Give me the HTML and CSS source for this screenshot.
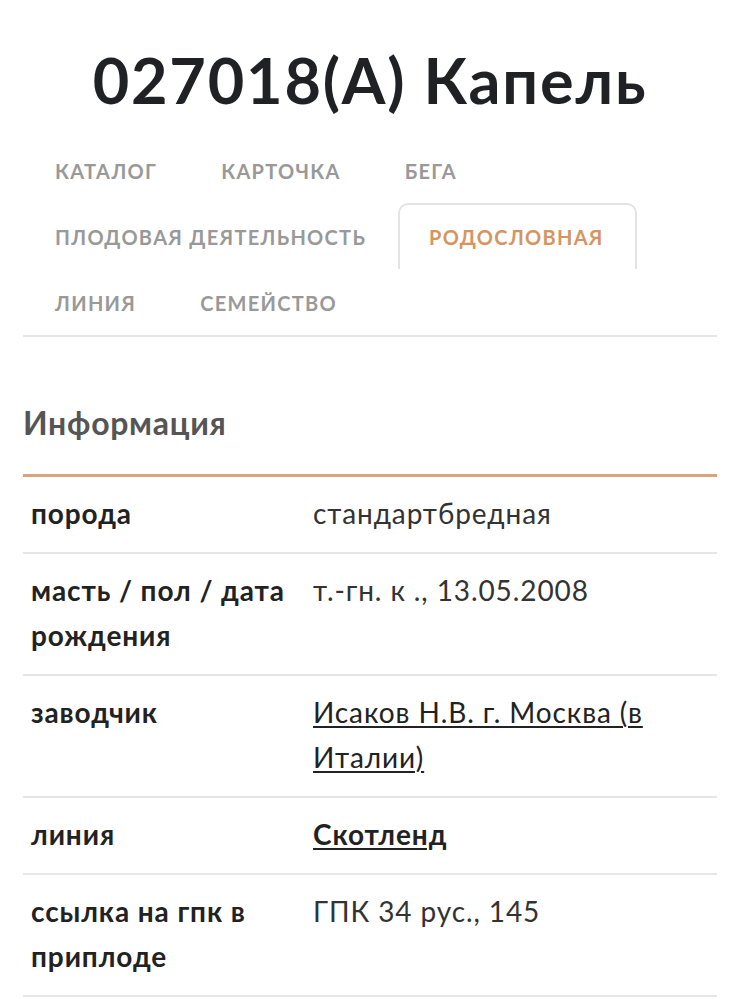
FILE: index.html
```html
<!DOCTYPE html>
<html lang="ru">
<head>
    <meta charset="UTF-8">
    <meta name="viewport" content="width=device-width, initial-scale=1.0">
    <title>027018(А) Капель</title>
    <link rel="stylesheet" href="styles.css">
</head>
<body>
    <div class="page">
        <h1 class="horse-title">027018(А) Капель</h1>

        <!-- Tabs -->
        <nav class="tabs">
            <a href="#" class="tab">Каталог</a>
            <a href="#" class="tab">Карточка</a>
            <a href="#" class="tab">Бега</a>
            <a href="#" class="tab">Плодовая деятельность</a>
            <a href="#" class="tab active">Родословная</a>
            <a href="#" class="tab">Линия</a>
            <a href="#" class="tab">Семейство</a>
        </nav>

        <!-- Info -->
        <h2 class="section-title">Информация</h2>
        <table class="info-table">
            <tr>
                <th>порода</th>
                <td>стандартбредная</td>
            </tr>
            <tr>
                <th>масть / пол / дата рождения</th>
                <td>т.-гн. к ., 13.05.2008</td>
            </tr>
            <tr>
                <th>заводчик</th>
                <td><a href="#">Исаков Н.В. г. Москва (в Италии)</a></td>
            </tr>
            <tr>
                <th>линия</th>
                <td><a href="#" class="strong-link">Скотленд</a></td>
            </tr>
            <tr>
                <th>ссылка на гпк в приплоде</th>
                <td>ГПК 34 рус., 145</td>
            </tr>
        </table>
    </div>
</body>
</html>
```

FILE: styles.css
```css
* {
    margin: 0;
    padding: 0;
    box-sizing: border-box;
}

body {
    font-family: Lato, 'Open Sans', sans-serif;
    background: #fff;
    color: #222;
}

.page {
    padding: 0 23px;
}

.horse-title {
    text-align: center;
    font-size: 63px;
    font-weight: 700;
    letter-spacing: 1.8px;
    color: #1f2124;
    line-height: 1;
    padding-top: 48px;
    height: 137px;
}

.tabs {
    display: flex;
    flex-wrap: wrap;
    border-bottom: 2px solid #e6e6e8;
}

.tab {
    display: block;
    height: 66px;
    line-height: 64px;
    padding: 0 30px;
    font-size: 20px;
    font-weight: 700;
    letter-spacing: 1.3px;
    text-transform: uppercase;
    color: #999;
    text-decoration: none;
    border: 2px solid transparent;
    border-bottom: none;
    border-radius: 10px 10px 0 0;
}

.tab.active {
    color: #d6955f;
    border-color: #e3e3e5;
    padding: 0 31px 0 29px;
}

.section-title {
    font-size: 32px;
    font-weight: 700;
    letter-spacing: 0.7px;
    color: #555;
    padding-top: 68px;
    height: 137px;
    line-height: 36px;
}

.info-table {
    width: 100%;
    border-collapse: collapse;
    border-top: 3px solid #d9a47b;
}

.info-table th,
.info-table td {
    text-align: left;
    vertical-align: top;
    font-size: 28px;
    letter-spacing: 0.9px;
    line-height: 45px;
    padding: 14px 8px 16px;
    border-bottom: 2px solid #e6e6e8;
}

.info-table th {
    width: 282px;
    font-weight: 700;
    color: #222;
}

.info-table td {
    font-weight: 400;
    color: #333;
}

.info-table a {
    color: #222;
    text-decoration-thickness: 2px;
    text-underline-offset: 3px;
}

.info-table a.strong-link {
    font-weight: 700;
}
```
